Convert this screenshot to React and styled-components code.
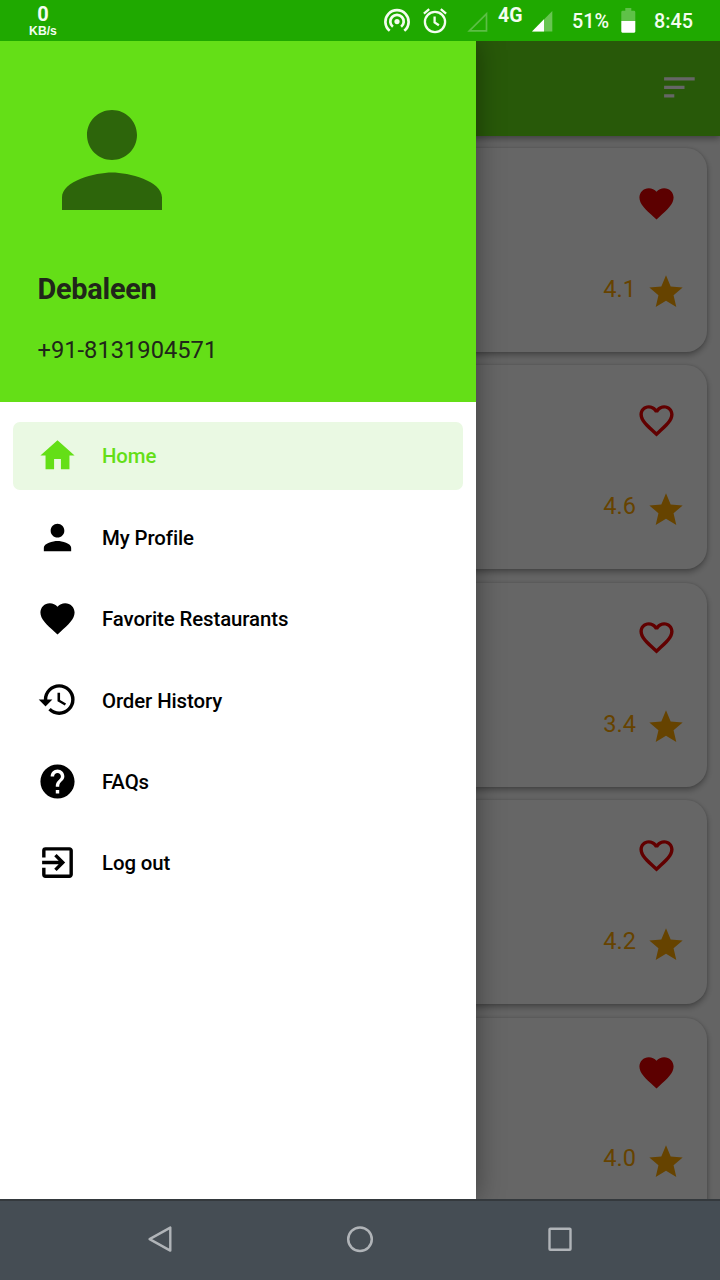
import React from "react";
import styled, { createGlobalStyle } from "styled-components";
import {
  MdExitToApp,
  MdFavorite,
  MdFavoriteBorder,
  MdHelp,
  MdHistory,
  MdHome,
  MdPerson,
  MdSort,
  MdStar,
} from "react-icons/md";

const GlobalStyle = createGlobalStyle`
  * { box-sizing: border-box; }
  body { margin: 0; font-family: Roboto, "Liberation Sans", sans-serif; overflow: hidden; }
  svg { display: block; flex: none; }
`;

const Screen = styled.div`
  width: 720px;
  height: 1280px;
  display: flex;
  flex-direction: column;
  overflow: hidden;
  background: #fafafa;
`;

const StatusBar = styled.header`
  height: 41px;
  flex: none;
  display: flex;
  justify-content: space-between;
  padding: 0 27px 0 28px;
  background: #1fa900;
  color: #f4fdf0;
`;

const NetSpeed = styled.div`
  width: 30px;
  padding-top: 3px;
  display: flex;
  flex-direction: column;
  align-items: center;
`;

const SpeedValue = styled.span`
  font: 700 20px/23px "Liberation Sans Narrow", Roboto, sans-serif;
`;

const SpeedUnit = styled.span`
  font: 700 12.2px/10px "Liberation Sans", sans-serif;
`;

const StatusIcons = styled.div`
  display: flex;
  align-items: center;
`;

const StatusSlot = styled.div`
  width: ${(p) => p.$width}px;
  margin-left: ${(p) => p.$gap || 0}px;
  padding-top: ${(p) => p.$drop || 0}px;
  padding-bottom: ${(p) => p.$lift || 0}px;
  white-space: nowrap;
  font-size: ${(p) => p.$size || 19.8}px;
  font-weight: ${(p) => p.$weight || 500};
  line-height: 24px;
`;

const Body = styled.div`
  position: relative;
  flex: 1;
  min-height: 0;
  overflow: hidden;
`;

const Restaurants = styled.main`
  height: 100%;
  display: flex;
  flex-direction: column;
`;

const AppBar = styled.div`
  height: 95px;
  flex: none;
  display: flex;
  justify-content: flex-end;
  align-items: center;
  padding: 0 20.5px 1.4px 0;
  background: #64df17;
  color: #fff;
  box-shadow: 0 2px 7px rgba(0, 0, 0, 0.4);
`;

const CardList = styled.div`
  flex: 1;
  min-height: 0;
  display: flex;
  flex-direction: column;
  gap: 13.4px;
  padding: 12px 13px 0;
`;

const Card = styled.article`
  height: 204px;
  flex: none;
  display: flex;
  flex-direction: column;
  align-items: flex-end;
  justify-content: space-between;
  padding: 34.5px 21.3px 39.6px 0;
  border-radius: 21px;
  background: #fff;
  box-shadow: 0 3px 6px rgba(0, 0, 0, 0.32), 0 0 3px rgba(0, 0, 0, 0.14);
`;

const HeartSlot = styled.div`
  padding-right: 8.7px;
  color: ${(p) => (p.$filled ? "#e60000" : "#f20000")};
`;

const Rating = styled.div`
  display: flex;
  align-items: center;
  gap: 9.7px;
  color: #ffa800;
`;

const Score = styled.span`
  font-size: 23.6px;
  line-height: 28px;
  padding-bottom: 7.2px;
`;

const Scrim = styled.div`
  position: absolute;
  inset: 0;
  background: rgba(0, 0, 0, 0.6);
`;

const Drawer = styled.aside`
  position: absolute;
  top: 0;
  bottom: 0;
  left: 0;
  width: 476px;
  background: #fff;
  box-shadow: 0 0 26px rgba(0, 0, 0, 0.4);
`;

const Profile = styled.div`
  height: 361px;
  padding: 44px 37.5px 0;
  background: #64df17;
  color: #20261a;
`;

const Avatar = styled.div`
  margin-left: -0.3px;
  color: #2d650b;
`;

const Name = styled.h1`
  margin: 36px 0 0;
  font-size: 28.9px;
  font-weight: 700;
  line-height: 36px;
  letter-spacing: -0.27px;
`;

const Phone = styled.p`
  margin: 28px 0 0;
  font-size: 23.7px;
  line-height: 30px;
`;

const Menu = styled.nav`
  display: flex;
  flex-direction: column;
  gap: 14px;
  padding: 20.4px 13px 0;
`;

const MenuItem = styled.a`
  height: 67.4px;
  display: flex;
  align-items: center;
  gap: 24px;
  padding-left: 24px;
  border-radius: 7px;
  background: ${(p) => (p.$active ? "#eaf9e3" : "transparent")};
  color: ${(p) => (p.$active ? "#64df17" : "#000")};
  font-size: 20.4px;
  font-weight: 500;
  line-height: 28px;
  letter-spacing: -0.1px;

  svg {
    margin-bottom: 0.7px;
  }
`;

const MenuLabel = styled.span`
  padding-top: 0.6px;
`;

const SystemNav = styled.footer`
  height: 81px;
  flex: none;
  display: flex;
  justify-content: center;
  align-items: center;
  gap: 172px;
  padding-bottom: 3px;
  background: #454d54;
  border-top: 2px solid #34393d;
`;

const TetherIcon = () => (
  <svg width="26" height="26" viewBox="0 0 26 26" fill="none" stroke="currentColor" strokeWidth="2.7">
    <path d="M5.7 22.8A11.6 11.6 0 1 1 20.3 22.8" />
    <path d="M8.9 18.8A6.7 6.7 0 1 1 17.1 18.8" />
    <circle cx="13" cy="13.6" r="2.6" fill="currentColor" stroke="none" />
  </svg>
);

const AlarmIcon = () => (
  <svg width="24" height="26" viewBox="0 0 24 26" fill="none" stroke="currentColor" strokeWidth="2.3">
    <circle cx="12" cy="14" r="10.1" />
    <path d="M11.6 8.4v6l4.3 2.9M0.9 5.6 6.2 1.2M23.1 5.6 17.8 1.2" />
  </svg>
);

const EmptySignalIcon = () => (
  <svg width="21" height="21" viewBox="0 0 21 21">
    <path d="M2.3 19.8h17.2v-17z" fill="none" stroke="#5cbe45" strokeWidth="1.7" />
  </svg>
);

const SignalIcon = () => (
  <svg width="21" height="21" viewBox="0 0 21 21">
    <path d="M0 20.5h20.3V0z" fill="#68c552" />
    <path d="M0 20.5h12V8.3z" fill="#fff" />
  </svg>
);

const BatteryIcon = () => (
  <svg width="15" height="25" viewBox="0 0 15 25">
    <path d="M0.3 4.2q0-1.4 1.4-1.4h2.6V0h6v2.8h2.6q1.4 0 1.4 1.4V13H.3z" fill="#5fc148" />
    <path d="M.3 13h14v10.6q0 1.1-1.1 1.1H1.4q-1.1 0-1.1-1.1z" fill="#fff" />
  </svg>
);

const BackIcon = () => (
  <svg width="28" height="28" viewBox="0 0 28 28" fill="none" stroke="#b0b4b8" strokeWidth="2.4" strokeLinejoin="round">
    <path d="M24.3 2.6v23L3.6 14.1z" />
  </svg>
);

const HomeCircleIcon = () => (
  <svg width="28" height="28" viewBox="0 0 28 28" fill="none" stroke="#b0b4b8" strokeWidth="2.5">
    <circle cx="14" cy="14.2" r="11.8" />
  </svg>
);

const RecentsIcon = () => (
  <svg width="28" height="28" viewBox="0 0 28 28" fill="none" stroke="#b0b4b8" strokeWidth="2.4">
    <rect x="3.5" y="3.7" width="21" height="21" rx="0.8" />
  </svg>
);

const restaurants = [
  { rating: "4.1", favorite: true },
  { rating: "4.6", favorite: false },
  { rating: "3.4", favorite: false },
  { rating: "4.2", favorite: false },
  { rating: "4.0", favorite: true },
];

const menu = [
  { label: "Home", Icon: MdHome, active: true },
  { label: "My Profile", Icon: MdPerson },
  { label: "Favorite Restaurants", Icon: MdFavorite },
  { label: "Order History", Icon: MdHistory },
  { label: "FAQs", Icon: MdHelp },
  { label: "Log out", Icon: MdExitToApp },
];

export default function App() {
  return (
    <Screen>
      <GlobalStyle />
      <StatusBar>
        <NetSpeed>
          <SpeedValue>0</SpeedValue>
          <SpeedUnit>KB/s</SpeedUnit>
        </NetSpeed>
        <StatusIcons>
          <StatusSlot $width={26}><TetherIcon /></StatusSlot>
          <StatusSlot $width={24} $gap={13}><AlarmIcon /></StatusSlot>
          <StatusSlot $width={21} $gap={20} $drop={1}><EmptySignalIcon /></StatusSlot>
          <StatusSlot $width={25} $gap={10} $lift={9} $size={19.5} $weight={700}>4G</StatusSlot>
          <StatusSlot $width={21} $gap={9} $drop={1}><SignalIcon /></StatusSlot>
          <StatusSlot $width={37} $gap={19} $drop={2}>51%</StatusSlot>
          <StatusSlot $width={15} $gap={12}><BatteryIcon /></StatusSlot>
          <StatusSlot $width={39} $gap={18} $drop={2}>8:45</StatusSlot>
        </StatusIcons>
      </StatusBar>
      <Body>
        <Restaurants>
          <AppBar><MdSort size={40.8} /></AppBar>
          <CardList>
            {restaurants.map(({ rating, favorite }) => (
              <Card key={rating}>
                <HeartSlot $filled={favorite}>
                  {favorite ? <MdFavorite size={41} /> : <MdFavoriteBorder size={41} />}
                </HeartSlot>
                <Rating>
                  <Score>{rating}</Score>
                  <MdStar size={40} />
                </Rating>
              </Card>
            ))}
          </CardList>
        </Restaurants>
        <Scrim />
        <Drawer>
          <Profile>
            <Avatar><MdPerson size={150} /></Avatar>
            <Name>Debaleen</Name>
            <Phone>+91-8131904571</Phone>
          </Profile>
          <Menu>
            {menu.map(({ label, Icon, active }) => (
              <MenuItem key={label} $active={active}>
                <Icon size={41} />
                <MenuLabel>{label}</MenuLabel>
              </MenuItem>
            ))}
          </Menu>
        </Drawer>
      </Body>
      <SystemNav>
        <BackIcon />
        <HomeCircleIcon />
        <RecentsIcon />
      </SystemNav>
    </Screen>
  );
}
